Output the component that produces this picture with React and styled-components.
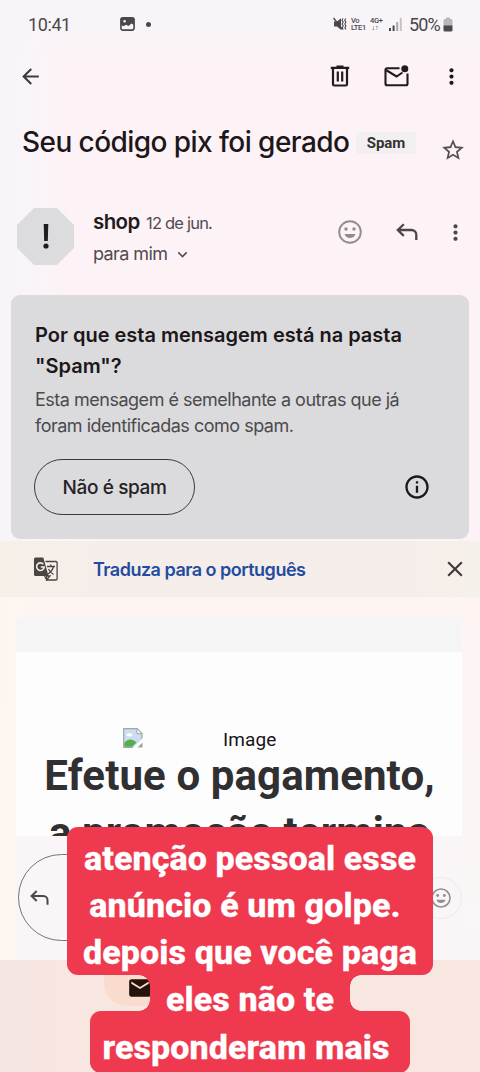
import React from "react";
import styled, { createGlobalStyle } from "styled-components";
import {
  MdArrowBack,
  MdMoreVert,
  MdOutlineInfo,
  MdClose,
  MdStarBorder,
  MdKeyboardArrowDown,
  MdEmail,
} from "react-icons/md";

const GlobalStyle = createGlobalStyle`
  * {
    box-sizing: border-box;
  }
  body {
    margin: 0;
    background: #fdf3f6;
  }
  h1, h2, h3, p {
    margin: 0;
  }
  svg {
    display: block;
    flex: none;
  }
`;

const Screen = styled.div`
  position: relative;
  width: 480px;
  height: 1072px;
  overflow: hidden;
  display: flex;
  flex-direction: column;
  font-family: Inter, Roboto, sans-serif;
  color: #1b171a;
`;

const Header = styled.header`
  height: 541px;
  flex: none;
  background: linear-gradient(180deg, #f7f5f9 12px, rgba(247, 245, 249, 0) 60px),
    linear-gradient(90deg, #f7f5fa 8px, rgba(253, 243, 246, 0) 70px), #fdf2f5;
`;

const StatusBar = styled.div`
  height: 48px;
  padding: 0 27px 0 28px;
  display: flex;
  align-items: center;
  font-family: Roboto, sans-serif;
  color: #4b474b;

  .time {
    width: 92px;
    font-size: 18px;
    letter-spacing: -0.4px;
  }
  .dot {
    width: 5px;
    height: 5px;
    margin-left: 11px;
    border-radius: 50%;
    background: #4b474b;
  }
  .battery-text {
    margin: 0 3px 0 6px;
    font-size: 18px;
    letter-spacing: -0.8px;
  }
`;

const StatusIcons = styled.div`
  margin-left: auto;
  display: flex;
  align-items: center;
`;

const NetworkLabel = styled.div`
  width: 15px;
  margin-left: 4px;
  font-size: 7.5px;
  font-weight: 500;
  line-height: 7px;
  letter-spacing: -0.3px;
  white-space: nowrap;

  & + svg {
    margin-left: 4px;
  }
`;

const Toolbar = styled.div`
  height: 56px;
  padding: 0 16px 0 18px;
  display: flex;
  align-items: center;

  .back {
    margin-right: auto;
    color: #3f3a3e;
  }
  .trash {
    margin-right: 34px;
  }
  .unread {
    margin-right: 30px;
  }
`;

const SubjectRow = styled.div`
  height: 94px;
  padding: 20px 14px 0 22px;
  display: flex;
  align-items: flex-start;
`;

const Subject = styled.h1`
  width: 334px;
  font-size: 28px;
  font-weight: 500;
  line-height: 36px;
  letter-spacing: -0.56px;
  white-space: nowrap;
`;

const Label = styled.span`
  width: 60px;
  height: 22px;
  margin-top: 8px;
  border-radius: 4px;
  background: #f2eff1;
  font: 700 15px/22px Roboto, sans-serif;
  text-align: center;
  color: #353235;
`;

const Star = styled(MdStarBorder)`
  margin: 13px 0 0 auto;
  color: #545054;
`;

const SenderRow = styled.div`
  height: 97px;
  padding: 10px 12px 0 17px;
  display: flex;
  align-items: flex-start;
`;

const Avatar = styled.div`
  width: 57px;
  height: 57px;
  display: flex;
  align-items: center;
  justify-content: center;
  background: #dcdcde;
  clip-path: polygon(30% 0, 70% 0, 100% 30%, 100% 70%, 70% 100%, 30% 100%, 0 70%, 0 30%);
`;

const SenderInfo = styled.div`
  margin-left: 19px;
  flex: 1;
  color: #504b50;

  .name {
    display: flex;
    align-items: baseline;
    line-height: 28px;
    font-size: 16.5px;
    letter-spacing: -0.8px;
  }
  .name strong {
    width: 53px;
    font-size: 20.5px;
    font-weight: 600;
    letter-spacing: -0.6px;
    color: #1f1b1e;
  }
  .to {
    display: flex;
    align-items: center;
    margin-top: 3px;
    font-size: 18px;
    line-height: 28px;
    letter-spacing: -0.6px;
  }
  .to svg {
    margin-left: 6px;
  }
`;

const SenderActions = styled.div`
  display: flex;
  align-items: center;
  height: 48px;

  .reply {
    margin: 0 25px 0 34px;
  }
`;

const SpamCard = styled.section`
  width: 458px;
  height: 244px;
  margin-left: 11px;
  padding: 25px 38px 0 23px;
  border-radius: 9px;
  background: #dbdbdd;
`;

const CardTitle = styled.h2`
  padding-left: 1px;
  font-size: 20px;
  font-weight: 600;
  line-height: 31px;
  white-space: nowrap;
`;

const CardText = styled.p`
  margin-top: 5px;
  padding-left: 1px;
  font-size: 18px;
  line-height: 26px;
  letter-spacing: -0.49px;
  white-space: nowrap;
  color: #4b4a4d;
`;

const CardActions = styled.div`
  margin-top: 20px;
  display: flex;
  align-items: center;
  justify-content: space-between;
`;

const PillButton = styled.button`
  width: 161px;
  height: 56px;
  padding: 0;
  border: 1.5px solid #3a383b;
  border-radius: 28px;
  background: none;
  font: 500 19px Inter, sans-serif;
  letter-spacing: -0.4px;
  color: #252326;
`;

const TranslateBar = styled.div`
  height: 56px;
  flex: none;
  padding: 0 12px 0 34px;
  display: flex;
  align-items: center;
  background: linear-gradient(90deg, #f6f0e9, #f5edea 120px, #f5edea 400px, #f6f0ea);

  .text {
    margin-left: 35px;
    flex: 1;
    font-size: 18px;
    font-weight: 600;
    letter-spacing: -0.5px;
    color: #1f4c9f;
  }
  .close {
    color: #403b3a;
  }
`;

const MailArea = styled.main`
  height: 363px;
  flex: none;
  padding: 20px 18px 0 16px;
  background: linear-gradient(90deg, #fdf6f0, rgba(253, 244, 242, 0) 60px),
    linear-gradient(180deg, #fdf4f2, #faf6f7);
`;

const MailBody = styled.article`
  height: 219px;
  padding-top: 76px;
  overflow: hidden;
  border-top: 35px solid #f4f5f4;
  background: #fefdfe;
  font-family: Roboto, sans-serif;
`;

const BrokenImage = styled.div`
  height: 21px;
  padding-left: 107px;
  display: flex;
  align-items: flex-start;
  font-size: 19px;
  line-height: 23px;
  color: #161416;

  span {
    margin-left: 80px;
    letter-spacing: 0.1px;
  }
`;

const Headline = styled.h2`
  margin-top: -2px;
  padding-left: 1px;
  font-size: 42px;
  font-weight: 700;
  line-height: 57px;
  letter-spacing: 0.1px;
  text-align: center;
  white-space: nowrap;
  color: #302f31;
`;

const ReplyRow = styled.div`
  height: 124px;
  padding: 18px 0 0 2px;
  display: flex;
  align-items: flex-start;
  background: #faf6f8;
`;

const ReplyField = styled.div`
  width: 390px;
  height: 87px;
  padding-left: 11px;
  display: flex;
  align-items: center;
  border: 1.3px solid #777376;
  border-radius: 44px;
  color: #454145;
`;

const ReactionButton = styled.div`
  width: 42px;
  height: 42px;
  margin: 23px 0 0 12px;
  display: flex;
  align-items: center;
  justify-content: center;
  border: 1px solid #efeaec;
  border-radius: 50%;
`;

const BottomNav = styled.nav`
  flex: 1;
  background: linear-gradient(90deg, #f5e5e3, #f8e6e1 70px);
`;

const ActiveTab = styled.div`
  width: 94px;
  height: 46px;
  margin-left: 104px;
  padding: 15px 0 0 23px;
  border-radius: 0 0 23px 23px;
  background: linear-gradient(180deg, #f8e4dd, #fadccf 16px);
  color: #24120b;
`;

// red caption that sits over the lower part of the page
const Caption = styled.div`
  position: absolute;
  top: 827px;
  left: 67px;
  width: 366px;
  display: flex;
  flex-direction: column;
  align-items: center;
  font: 800 34px/47.2px Roboto, sans-serif;
  letter-spacing: 0.1px;
  -webkit-text-stroke: 0.3px #fff;
  text-align: center;
  white-space: nowrap;
  color: #fff;
`;

const CaptionBlock = styled.div`
  width: ${(props) => props.$width}px;
  height: ${(props) => props.$height}px;
  padding-top: ${(props) => props.$top}px;
  border-radius: 11px;
  background: #ef394e;
`;

const CaptionNeck = styled.div`
  position: relative;
  width: 200px;
  height: 36px;
  line-height: 49px;
  background: #ef394e;

  /* concave corners between the neck and the two blocks */
  &::before,
  &::after {
    content: "";
    position: absolute;
    top: 0;
    width: 11px;
    height: 36px;
  }
  &::before {
    left: -11px;
    background: radial-gradient(circle at 0 100%, transparent 10.5px, #ef394e 11px) 0 0 / 11px 11px no-repeat,
      radial-gradient(circle at 0 0, transparent 10.5px, #ef394e 11px) 0 100% / 11px 11px no-repeat;
  }
  &::after {
    right: -11px;
    background: radial-gradient(circle at 100% 100%, transparent 10.5px, #ef394e 11px) 0 0 / 11px 11px no-repeat,
      radial-gradient(circle at 100% 0, transparent 10.5px, #ef394e 11px) 0 100% / 11px 11px no-repeat;
  }
`;

const CaptionLine = styled.div`
  padding-right: ${(props) => props.$shift || 0}px;
`;

function PictureIcon() {
  return (
    <svg width="15" height="14" viewBox="0 0 15 14">
      <rect x="0.9" y="0.9" width="13.2" height="12.2" rx="2" fill="none" stroke="#4b474b" strokeWidth="1.6" />
      <path d="M1 1h13v7l-2.500-1.500-3 2.500-2.500-1.200-2.500 1.500L1 8z" fill="#4b474b" />
      <circle cx="4.600" cy="4.200" r="1.300" fill="#fdf3f6" />
    </svg>
  );
}

function MuteIcon() {
  return (
    <svg width="14" height="14" viewBox="0 0 14 14" fill="none" stroke="#4b474b">
      <path d="M1 4.500h3L8 1.200v11.600L4 9.500H1z" fill="#4b474b" stroke="none" />
      <path d="M0.500 1l9 11.500" strokeWidth="1.400" />
      <path d="M10 1.500l-1 1.800 1.200 1.800L9.200 7l1 1.900-1 1.800 1 1.800M12.700 1.500l-1 1.800 1.200 1.800-1 1.900 1 1.900-1 1.800 1 1.800" strokeWidth="1.100" />
    </svg>
  );
}

function SignalIcon() {
  return (
    <svg width="14" height="13" viewBox="0 0 14 13">
      <rect x="0" y="10" width="2" height="3" fill="#4b474b" />
      <rect x="3.600" y="7.500" width="2" height="5.500" fill="#4b474b" />
      <rect x="7.200" y="4" width="2" height="9" fill="#aaa6aa" />
      <rect x="10.800" y="0" width="2" height="13" fill="#c6c2c6" />
    </svg>
  );
}

function BatteryIcon() {
  return (
    <svg width="10" height="15" viewBox="0 0 10 15">
      <path d="M3 0.500h4v1.500h1a1.500 1.500 0 0 1 1.500 1.500V9h-9V3.500A1.500 1.500 0 0 1 2 2h1z" fill="#b9b5b9" />
      <path d="M0.500 8.500h9v4.500a1.500 1.500 0 0 1-1.500 1.500H2A1.500 1.500 0 0 1 .5 13z" fill="#4b474b" />
    </svg>
  );
}

function TrashIcon() {
  return (
    <svg className="trash" width="20" height="22" viewBox="0 0 20 22" fill="none" stroke="#1f1b1e" strokeWidth="2.200">
      <path d="M0.800 2.800h18.400M6.500 1.600h7" />
      <path d="M3 3v16.200a1.300 1.300 0 0 0 1.300 1.300h11.400a1.300 1.300 0 0 0 1.300-1.300V3" />
      <path d="M7.800 6.500v10M12.200 6.500v10" />
    </svg>
  );
}

function UnreadMailIcon() {
  return (
    <svg className="unread" width="25" height="23" viewBox="0 0 25 23" fill="none" stroke="#1f1b1e" strokeWidth="2.100">
      <path d="M15.500 3.200H3a1.500 1.500 0 0 0-1.500 1.500v14A1.500 1.500 0 0 0 3 20.200h19a1.500 1.500 0 0 0 1.500-1.500V8.500" />
      <path d="M2 5l10.500 6.500 6-4" />
      <circle cx="20.800" cy="3.800" r="3.500" fill="#1f1b1e" stroke="none" />
    </svg>
  );
}

function ReplyIcon({ size, className }) {
  return (
    <svg
      className={className}
      width={size}
      height={size * 0.82}
      viewBox="0 0 22 18"
      fill="none"
      stroke="#4a464a"
      strokeWidth="2.300"
    >
      <path d="M7.800 1.200L1.800 7l6 5.800M2 7h13.500a4.800 4.800 0 0 1 4.800 4.800V17" />
    </svg>
  );
}

function SmileIcon({ size }) {
  return (
    <svg width={size} height={size} viewBox="0 0 24 24">
      <circle cx="12" cy="12" r="10.800" fill="none" stroke="#918c91" strokeWidth="1.900" />
      <circle cx="8" cy="9" r="1.700" fill="#918c91" />
      <circle cx="16" cy="9" r="1.700" fill="#918c91" />
      <path d="M6.500 14h11c-.8 2.600-2.900 4-5.500 4s-4.700-1.400-5.500-4z" fill="#918c91" />
    </svg>
  );
}

function TranslateIcon() {
  return (
    <svg width="24" height="24" viewBox="0 0 24 24" fill="none">
      <path d="M11.500 4.500h10.300a1.300 1.300 0 0 1 1.300 1.300v15.900a1.300 1.300 0 0 1-1.300 1.300H13l-2.500-4" stroke="#4a4443" strokeWidth="1.300" />
      <path d="M1.500 0.500h7.800L14.500 19h-13A1.500 1.500 0 0 1 0 17.500V2A1.500 1.500 0 0 1 1.500.5z" fill="#4a4443" />
      <path d="M9.300 7.200A3.800 3.800 0 1 0 10.200 10H6.800" stroke="#f5efec" strokeWidth="1.600" />
      <path d="M13 9.500h8M16.800 7.500v2M19.500 9.500c-.8 3.500-3 6-6 7.800M14.500 12c1 2.200 2.700 4 5 5.500M12.500 19v4l3.500-4z" stroke="#4a4443" strokeWidth="1.300" />
    </svg>
  );
}

function BrokenImageIcon() {
  return (
    <svg width="20" height="20" viewBox="0 0 20 20">
      <path d="M0.700 0.700H14l5 5V12L12 19.300H.7z" fill="#cbdcf3" stroke="#a3a5a8" strokeWidth="1.200" />
      <path d="M14 0.700v5h5z" fill="#fff" stroke="#a3a5a8" strokeWidth="1" />
      <ellipse cx="6.500" cy="6.800" rx="3" ry="1.600" fill="#fff" />
      <path d="M1.300 18.700V15c3-4 7-4.500 10.500-2l1.700 1.500-4.500 4.200z" fill="#59ad48" />
      <path d="M14.500 19.500l5-5v5z" fill="#9aa69a" />
      <path d="M9.500 20L20 10v3.500L13 20z" fill="#fff" />
    </svg>
  );
}

export default function App() {
  return (
    <>
      <GlobalStyle />
      <Screen>
        <Header>
          <StatusBar>
            <span className="time">10:41</span>
            <PictureIcon />
            <span className="dot" />
            <StatusIcons>
              <MuteIcon />
              <NetworkLabel>
                Vo
                <br />
                LTE1
              </NetworkLabel>
              <NetworkLabel>
                4G+
                <br />
                &nbsp;↓↑
              </NetworkLabel>
              <SignalIcon />
              <span className="battery-text">50%</span>
              <BatteryIcon />
            </StatusIcons>
          </StatusBar>

          <Toolbar>
            <MdArrowBack className="back" size={25} />
            <TrashIcon />
            <UnreadMailIcon />
            <MdMoreVert size={25} />
          </Toolbar>

          <SubjectRow>
            <Subject>Seu código pix foi gerado</Subject>
            <Label>Spam</Label>
            <Star size={26} />
          </SubjectRow>

          <SenderRow>
            <Avatar>
              <svg width="6" height="25" viewBox="0 0 6 25" fill="#1f1b1e">
                <path d="M0.700 0h4.600L4.800 17H1.200z" />
                <circle cx="3" cy="22" r="2.600" />
              </svg>
            </Avatar>
            <SenderInfo>
              <div className="name">
                <strong>shop</strong>
                <span>12 de jun.</span>
              </div>
              <div className="to">
                para mim
                <MdKeyboardArrowDown size={19} />
              </div>
            </SenderInfo>
            <SenderActions>
              <SmileIcon size={24} />
              <ReplyIcon className="reply" size={22} />
              <MdMoreVert size={25} color="#4a464a" />
            </SenderActions>
          </SenderRow>

          <SpamCard>
            <CardTitle>
              Por que esta mensagem está na pasta
              <br />
              "Spam"?
            </CardTitle>
            <CardText>
              Esta mensagem é semelhante a outras que já
              <br />
              foram identificadas como spam.
            </CardText>
            <CardActions>
              <PillButton>Não é spam</PillButton>
              <MdOutlineInfo size={28} />
            </CardActions>
          </SpamCard>
        </Header>

        <TranslateBar>
          <TranslateIcon />
          <span className="text">Traduza para o português</span>
          <MdClose className="close" size={26} />
        </TranslateBar>

        <MailArea>
          <MailBody>
            <BrokenImage>
              <BrokenImageIcon />
              <span>Image</span>
            </BrokenImage>
            <Headline>
              Efetue o pagamento,
              <br />a promoção termina
            </Headline>
          </MailBody>
          <ReplyRow>
            <ReplyField>
              <ReplyIcon size={19} />
            </ReplyField>
            <ReactionButton>
              <SmileIcon size={20} />
            </ReactionButton>
          </ReplyRow>
        </MailArea>

        <BottomNav>
          <ActiveTab>
            <MdEmail size={26} />
          </ActiveTab>
        </BottomNav>

        <Caption>
          <CaptionBlock $width={366} $height={148} $top={8}>
            <CaptionLine>atenção pessoal esse</CaptionLine>
            <CaptionLine $shift={10}>anúncio é um golpe.</CaptionLine>
            <CaptionLine>depois que você paga</CaptionLine>
          </CaptionBlock>
          <CaptionNeck>
            <CaptionLine>eles não te</CaptionLine>
          </CaptionNeck>
          <CaptionBlock $width={320} $height={62} $top={13}>
            <CaptionLine $shift={8}>responderam mais</CaptionLine>
          </CaptionBlock>
        </Caption>
      </Screen>
    </>
  );
}
